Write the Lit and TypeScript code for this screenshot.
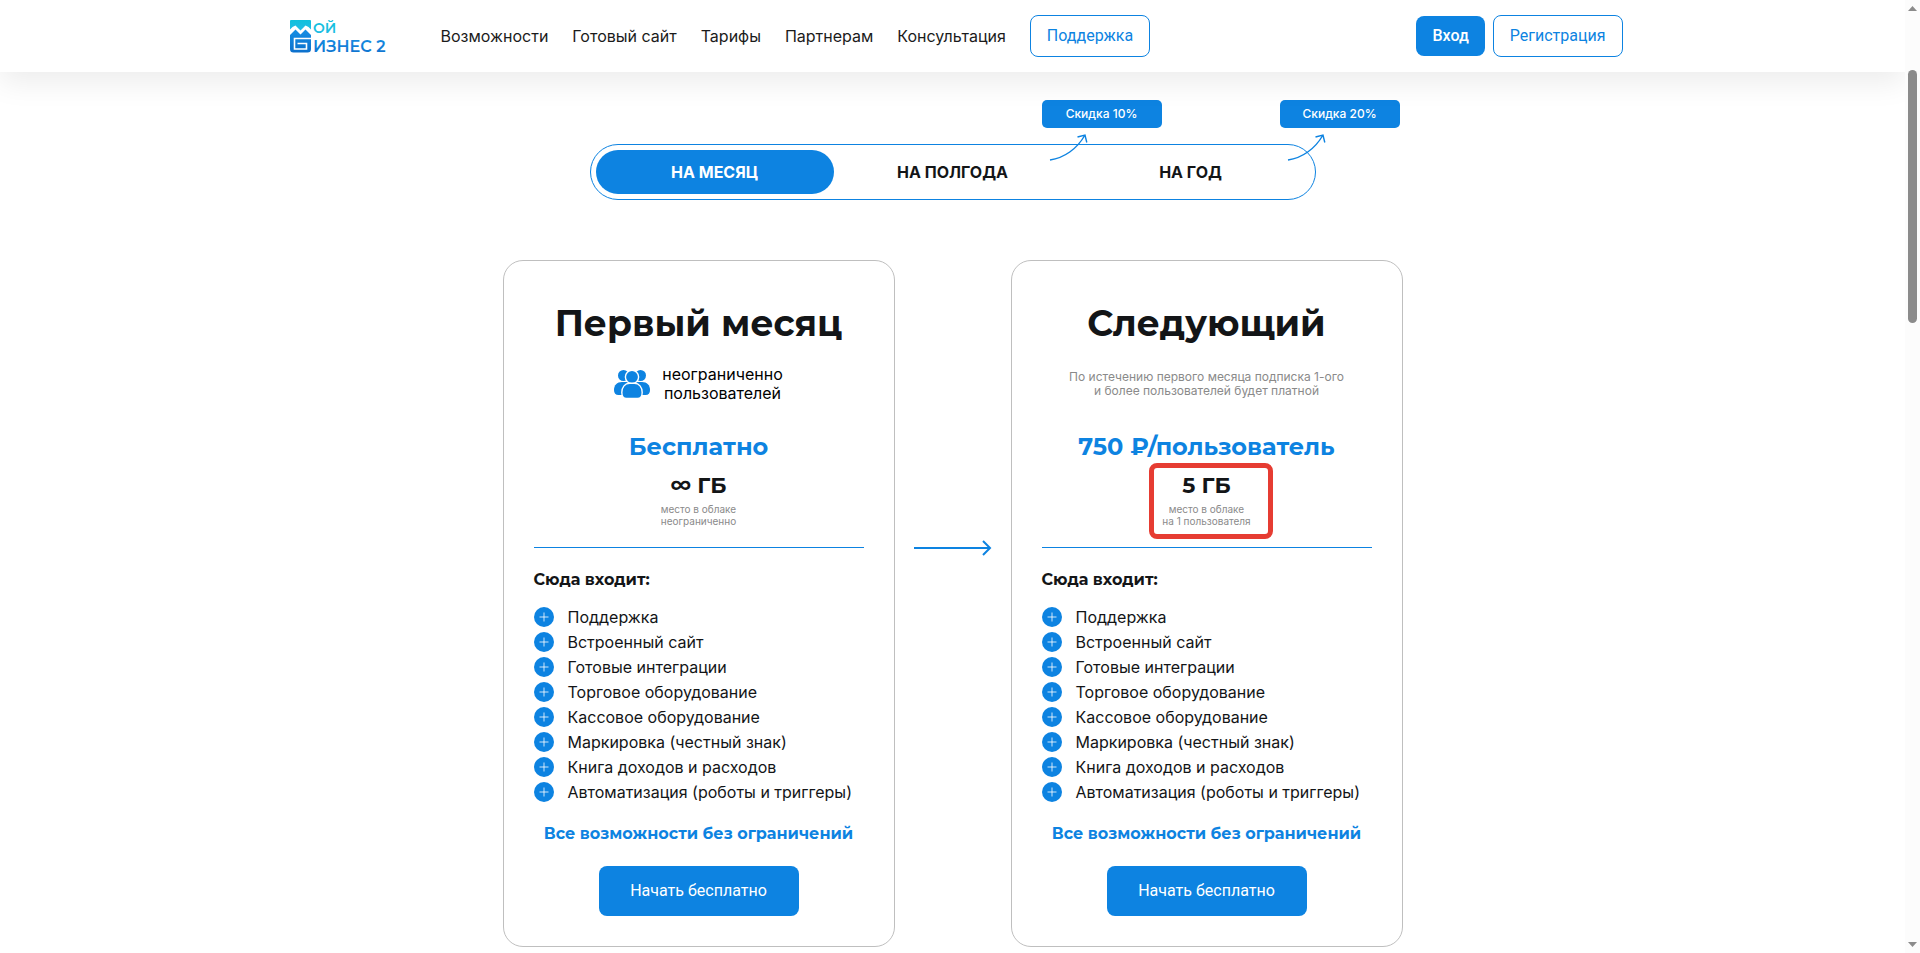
import { LitElement, html, svg, css, nothing, TemplateResult } from "lit";
import { customElement, property, state } from "lit/decorators.js";
import { classMap } from "lit/directives/class-map.js";

interface Plan {
  title: string;
  users?: string[];
  note?: string[];
  price: string;
  storage: string;
  storageNote: string[];
  marked: boolean;
}

const FEATURES = [
  "Поддержка",
  "Встроенный сайт",
  "Готовые интеграции",
  "Торговое оборудование",
  "Кассовое оборудование",
  "Маркировка (честный знак)",
  "Книга доходов и расходов",
  "Автоматизация (роботы и триггеры)",
];

const PLANS: Plan[] = [
  {
    title: "Первый месяц",
    users: ["неограниченно", "пользователей"],
    price: "Бесплатно",
    storage: "∞ ГБ",
    storageNote: ["место в облаке", "неограниченно"],
    marked: false,
  },
  {
    title: "Следующий",
    note: ["По истечению первого месяца подписка 1-ого", "и более пользователей будет платной"],
    price: "750 ₽/пользователь",
    storage: "5 ГБ",
    storageNote: ["место в облаке", "на 1 пользователя"],
    marked: true,
  },
];

const lines = (parts: string[]) => parts.map((p, i) => (i ? html`<br />${p}` : p));

@customElement("site-header")
export class SiteHeader extends LitElement {
  static styles = css`
    :host {
      display: block;
      position: relative;
      z-index: 2;
      background: #fff;
      box-shadow: 0 10px 30px rgba(0, 0, 0, 0.08);
      font-family: "Inter", sans-serif;
      font-size: 16px;
    }
    .bar {
      box-sizing: border-box;
      max-width: 1340px;
      min-height: 72px;
      margin: 0 auto;
      padding-left: 7px;
      display: flex;
      align-items: center;
      justify-content: space-between;
    }
    .nav,
    .auth {
      display: flex;
      align-items: center;
    }
    .nav {
      gap: 24px;
    }
    .auth {
      gap: 8px;
    }
    .logo {
      display: block;
      width: 127px;
      height: 36px;
    }
    .logo svg {
      display: block;
    }
    .word {
      font-family: "Montserrat", "DejaVu Sans", sans-serif;
      font-size: 16px;
      font-weight: 600;
    }
    .top {
      font-size: 14px;
    }
    .link {
      color: #1b1b1b;
      text-decoration: none;
      line-height: 24px;
    }
    .btn {
      box-sizing: border-box;
      display: block;
      padding: 0 16px;
      border: 1px solid #0d83e1;
      border-radius: 8px;
      background: #fff;
      color: #0d83e1;
      font-family: "Roboto", sans-serif;
      font-size: 16px;
      line-height: 40px;
      text-decoration: none;
      cursor: pointer;
    }
    .solid {
      border: 0;
      background: #0d83e1;
      color: #fff;
      font-weight: 500;
    }
  `;

  render() {
    return html`
      <div class="bar">
        <nav class="nav">
          <a class="logo" href="#" aria-label="Мой бизнес 2">
            <svg width="127" height="36" viewBox="0 0 127 36">
              <defs>
                <linearGradient id="g1" x1="0" y1="0" x2="0" y2="1">
                  <stop offset="0" stop-color="#0fc0dc" />
                  <stop offset="1" stop-color="#22bde6" />
                </linearGradient>
                <linearGradient id="g2" x1="0" y1="0" x2="0" y2="1">
                  <stop offset="0" stop-color="#178fe4" />
                  <stop offset="1" stop-color="#0c70cc" />
                </linearGradient>
              </defs>
              <path fill="url(#g1)" d="M0 3Q0 2 1 2H20Q21 2 21 3V11.500L18.500 9L15.500 7.500L10.500 12.500L5.500 7.500L2.500 9L0 11.500Z" />
              <path
                fill="url(#g2)"
                d="M0 17L5.500 11.500L10.500 16.500L15.500 11.500L21 17V31Q21 34.500 17.500 34.500H3.500Q0 34.500 0 31Z"
              />
              <path fill="none" stroke="#fff" stroke-width="1.600" d="M21 20.500H4.500V31H16.500V25.500H7.500" />
              <text class="word top" x="23" y="15" fill="url(#g1)">ОЙ</text>
              <text class="word" x="23" y="34" fill="url(#g2)">ИЗНЕС 2</text>
            </svg>
          </a>
          <a class="link" href="#features">Возможности</a>
          <a class="link" href="#site">Готовый сайт</a>
          <a class="link" href="#plans">Тарифы</a>
          <a class="link" href="#partners">Партнерам</a>
          <a class="link" href="#consult">Консультация</a>
          <a class="btn" href="#support">Поддержка</a>
        </nav>
        <div class="auth">
          <button class="btn solid" type="button">Вход</button>
          <button class="btn" type="button">Регистрация</button>
        </div>
      </div>
    `;
  }
}

@customElement("period-switch")
export class PeriodSwitch extends LitElement {
  static styles = css`
    :host {
      display: block;
      font-family: "Inter", sans-serif;
    }
    .track {
      box-sizing: border-box;
      width: 726px;
      max-width: 100%;
      margin: 0 auto;
      padding: 5px;
      border: 1px solid #0d83e1;
      border-radius: 28px;
      display: grid;
      grid-template-columns: repeat(3, 1fr);
    }
    .cell {
      position: relative;
    }
    .tab {
      display: block;
      width: 100%;
      padding: 0;
      border: 0;
      border-radius: 22px;
      background: none;
      color: #131517;
      font: 700 16px/44px "Inter", sans-serif;
      cursor: pointer;
    }
    .active {
      background: #0d83e1;
      color: #fff;
    }
    .badge {
      position: absolute;
      right: -90px;
      top: -50px;
      width: 120px;
      border-radius: 5px;
      background: #0d83e1;
      color: #fff;
      text-align: center;
      font-size: 12px;
      font-weight: 500;
      line-height: 28px;
    }
    .swoosh {
      position: absolute;
      right: -17px;
      top: -17px;
    }
  `;

  @state() private current = 0;

  private tabs = [
    { label: "НА МЕСЯЦ", sale: "" },
    { label: "НА ПОЛГОДА", sale: "Скидка 10%" },
    { label: "НА ГОД", sale: "Скидка 20%" },
  ];

  render() {
    return html`
      <div class="track">
        ${this.tabs.map(
          (t, i) => html`
            <div class="cell">
              <button
                type="button"
                class=${classMap({ tab: true, active: i === this.current })}
                aria-pressed=${i === this.current ? "true" : "false"}
                @click=${() => (this.current = i)}
              >
                ${t.label}
              </button>
              ${t.sale
                ? html`
                    <span class="badge">${t.sale}</span>
                    <svg class="swoosh" width="40" height="28" viewBox="0 0 40 28" fill="none" stroke="#0d83e1" stroke-width="1.400">
                      <path d="M1 27C15 25 28 16 36 2M28.500 4L36 2L37.800 9.500" />
                    </svg>
                  `
                : nothing}
            </div>
          `
        )}
      </div>
    `;
  }
}

@customElement("plan-card")
export class PlanCard extends LitElement {
  static styles = css`
    :host {
      display: block;
      box-sizing: border-box;
      width: 392px;
      padding: 32px 30px 30px;
      border: 1px solid #bfbfbf;
      border-radius: 20px;
      font-family: "Inter", sans-serif;
      color: #131517;
    }
    .title {
      margin: 0;
      text-align: center;
      font-family: "Montserrat", "Inter", sans-serif;
      font-size: 36px;
      font-weight: 700;
      line-height: 60px;
    }
    .who {
      min-height: 62px;
      display: flex;
      align-items: center;
      justify-content: center;
      gap: 12px;
      color: #000;
      font-size: 16px;
      line-height: 19px;
      text-align: center;
    }
    .note {
      color: #8a8a8a;
      font-size: 12px;
      line-height: 14px;
    }
    .price {
      margin-top: 17px;
      text-align: center;
      color: #0d83e1;
      font-family: "Montserrat", "Inter", sans-serif;
      font-size: 24px;
      font-weight: 700;
      line-height: 30px;
      white-space: nowrap;
    }
    .storage {
      position: relative;
      margin-top: 9px;
      padding-bottom: 20px;
      border-bottom: 1px solid #0d83e1;
      text-align: center;
    }
    .size {
      font-family: "Montserrat", "Inter", sans-serif;
      font-size: 22px;
      font-weight: 700;
      line-height: 30px;
    }
    .sub {
      margin-top: 2px;
      color: #8a8a8a;
      font-size: 10px;
      line-height: 12px;
    }
    .mark {
      position: absolute;
      box-sizing: border-box;
      left: 107px;
      top: -8px;
      width: 124px;
      height: 76px;
      border: 5px solid #e63c32;
      border-radius: 8px;
    }
    .heading {
      margin: 22px 0 0;
      font-family: "Montserrat", "Inter", sans-serif;
      font-size: 16px;
      font-weight: 700;
      line-height: 20px;
    }
    .list {
      margin: 17px 0 0;
      padding: 0;
      list-style: none;
      display: grid;
      gap: 5px;
    }
    .item {
      display: flex;
      align-items: center;
      gap: 14px;
      font-size: 16px;
      line-height: 20px;
      white-space: nowrap;
    }
    .promo {
      margin: 22px 0 0;
      text-align: center;
      color: #0d83e1;
      font-family: "Montserrat", "Inter", sans-serif;
      font-size: 16px;
      font-weight: 700;
      line-height: 20px;
    }
    .start {
      display: block;
      width: 200px;
      margin: 22px auto 0;
      padding: 0;
      border: 0;
      border-radius: 8px;
      background: #0d83e1;
      color: #fff;
      font: 400 16px/50px "Roboto", sans-serif;
      cursor: pointer;
    }
  `;

  @property({ attribute: false }) plan!: Plan;

  private usersIcon(): TemplateResult {
    return html`
      <svg width="36" height="28" viewBox="0 0 36 28" fill="#0d83e1" stroke="#fff" stroke-width="1.400">
        <g stroke="none">
          <circle cx="9.500" cy="5.500" r="5.500" />
          <circle cx="26.500" cy="5.500" r="5.500" />
          <path d="M0 20C0 15 3 12 8 12H28C33 12 36 15 36 20Q36 25 31.500 25H4.500Q0 25 0 20Z" />
        </g>
        <circle cx="18" cy="7" r="6.600" />
        <path d="M7.800 22.500C7.800 17 11 13.300 15.500 13.300H20.500C25 13.300 28.200 17 28.200 22.500Q28.200 28.500 23.500 28.500H12.500Q7.800 28.500 7.800 22.500Z" />
      </svg>
    `;
  }

  private plusIcon(): TemplateResult {
    return html`
      <svg width="20" height="20" viewBox="0 0 20 20">
        <circle cx="10" cy="10" r="10" fill="#0d83e1" />
        <path d="M5.500 10H14.500M10 5.500V14.500" stroke="#fff" stroke-opacity=".8" />
      </svg>
    `;
  }

  render() {
    const p = this.plan;
    return html`
      <h2 class="title">${p.title}</h2>
      ${p.users
        ? html`<div class="who">${this.usersIcon()}<span>${lines(p.users)}</span></div>`
        : html`<div class="who"><span class="note">${lines(p.note ?? [])}</span></div>`}
      <div class="price">${p.price}</div>
      <div class="storage">
        <div class="size">${p.storage}</div>
        <div class="sub">${lines(p.storageNote)}</div>
        ${p.marked ? html`<span class="mark"></span>` : nothing}
      </div>
      <h3 class="heading">Сюда входит:</h3>
      <ul class="list">
        ${FEATURES.map((f) => html`<li class="item">${this.plusIcon()}<span>${f}</span></li>`)}
      </ul>
      <p class="promo">Все возможности без ограничений</p>
      <button class="start" type="button">Начать бесплатно</button>
    `;
  }
}

@customElement("app-root")
export class AppRoot extends LitElement {
  static styles = css`
    :host {
      display: flex;
      height: 100vh;
      overflow: hidden;
      background: #fff;
    }
    .page {
      flex: 1;
      min-width: 0;
      overflow: hidden;
    }
    .content {
      padding-top: 72px;
    }
    .plans {
      margin-top: 60px;
      display: flex;
      justify-content: center;
      align-items: flex-start;
    }
    .arrow {
      width: 116px;
      padding-top: 280px;
      display: flex;
      justify-content: center;
    }
    .scroll {
      box-sizing: border-box;
      width: 15px;
      padding: 5px 3px;
      display: flex;
      flex-direction: column;
      justify-content: space-between;
      background: #fcfcfc;
    }
    .rail {
      flex: 1;
      padding-top: 59px;
    }
    .thumb {
      width: 9px;
      height: 29%;
      border-radius: 5px;
      background: #8b8b8b;
    }
    .tip {
      display: block;
    }
  `;

  private tip(d: string) {
    return html`<svg class="tip" width="9" height="6" viewBox="0 0 9 6">${svg`<path d=${d} fill="#8b8b8b" />`}</svg>`;
  }

  render() {
    return html`
      <div class="page">
        <site-header></site-header>
        <main class="content">
          <period-switch></period-switch>
          <section class="plans">
            <plan-card .plan=${PLANS[0]}></plan-card>
            <div class="arrow">
              <svg width="78" height="16" viewBox="0 0 78 16" fill="none" stroke="#0d83e1" stroke-width="2">
                <path d="M0 8H76M69 1L76 8L69 15" />
              </svg>
            </div>
            <plan-card .plan=${PLANS[1]}></plan-card>
          </section>
        </main>
      </div>
      <div class="scroll" aria-hidden="true">
        ${this.tip("M4.500 1L9 6H0Z")}
        <div class="rail"><div class="thumb"></div></div>
        ${this.tip("M4.500 5L9 0H0Z")}
      </div>
    `;
  }
}
